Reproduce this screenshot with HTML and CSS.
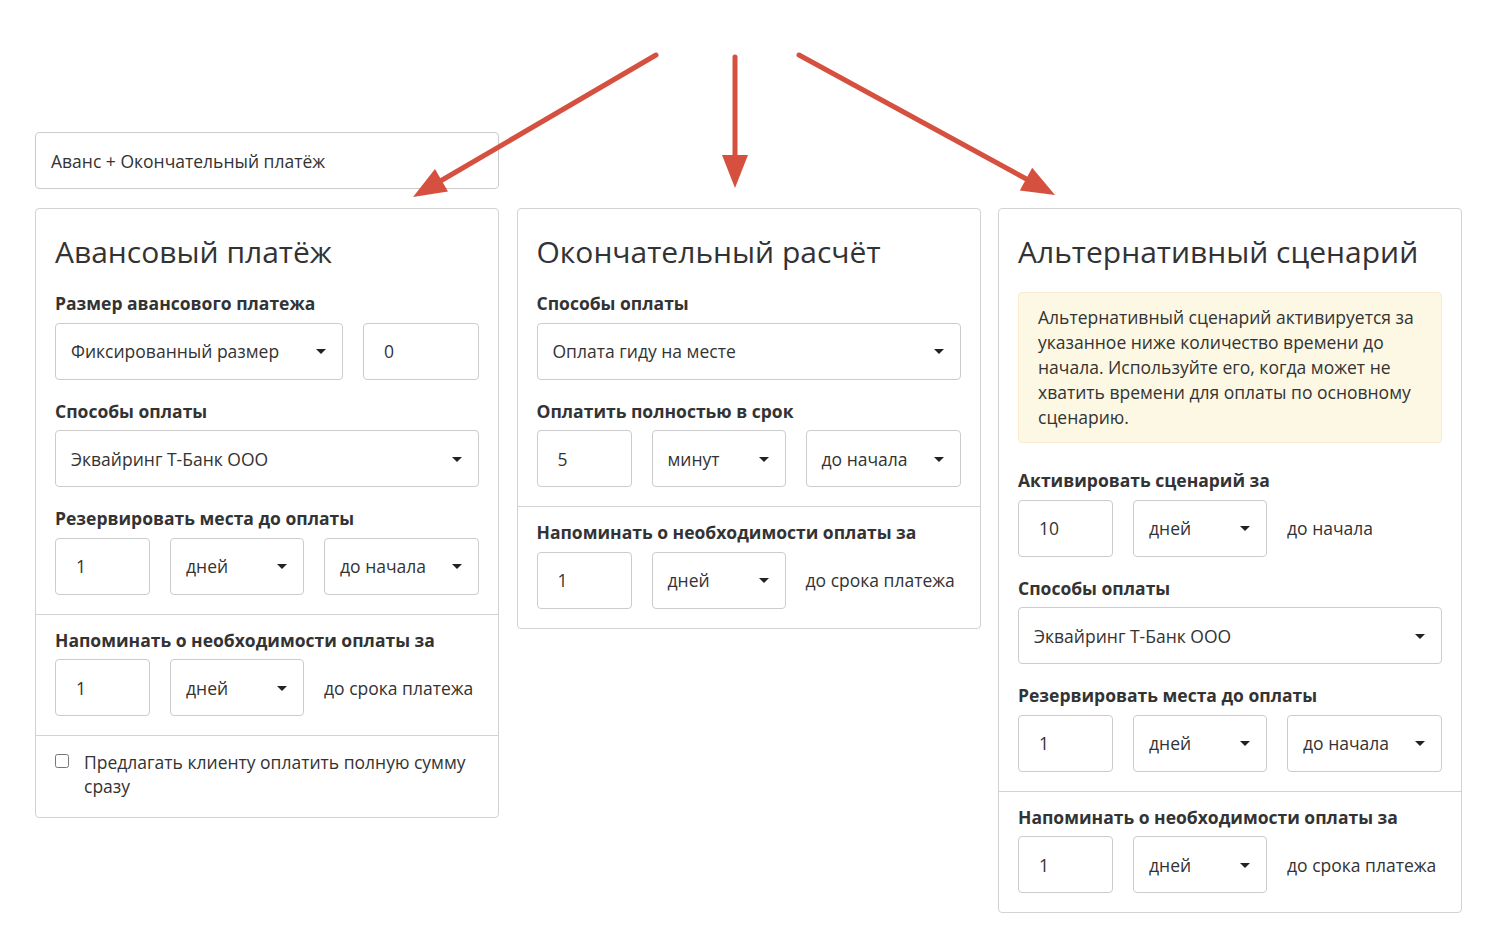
FILE: index.html
```html
<!DOCTYPE html>
<html lang="ru">
<head>
    <meta charset="UTF-8">
    <meta name="viewport" content="width=device-width, initial-scale=1.0">
    <title>Схема оплаты</title>
    <link rel="stylesheet" href="styles.css">
</head>
<body>
    <div class="page">
        <!-- стрелки-пометки поверх формы -->
        <svg class="arrows" width="1487" height="929" viewBox="0 0 1487 929">
            <g stroke="#d5503f" stroke-width="5" stroke-linecap="round" fill="none">
                <line x1="656" y1="55" x2="437" y2="183" />
                <line x1="735" y1="57" x2="735" y2="160" />
                <line x1="799" y1="55" x2="1030" y2="181" />
            </g>
            <g fill="#d5503f">
                <polygon points="413,197 448,191.5 435,169" />
                <polygon points="735,188 722,155 748,155" />
                <polygon points="1055,195 1019.8,190.6 1032.2,167.8" />
            </g>
        </svg>

        <div class="mode-select">Аванс + Окончательный платёж</div>

        <div class="columns">
            <!-- Аванс -->
            <div class="panel">
                <div class="section">
                    <h2>Авансовый платёж</h2>
                    <div class="field">
                        <label>Размер авансового платежа</label>
                        <div class="row row-amount">
                            <div class="select">Фиксированный размер</div>
                            <input class="input" type="text" value="0">
                        </div>
                    </div>
                    <div class="field">
                        <label>Способы оплаты</label>
                        <div class="select">Эквайринг Т-Банк ООО</div>
                    </div>
                    <div class="field">
                        <label>Резервировать места до оплаты</label>
                        <div class="row">
                            <input class="input" type="text" value="1">
                            <div class="select">дней</div>
                            <div class="select">до начала</div>
                        </div>
                    </div>
                </div>
                <div class="section">
                    <div class="field">
                        <label>Напоминать о необходимости оплаты за</label>
                        <div class="row">
                            <input class="input" type="text" value="1">
                            <div class="select">дней</div>
                            <span class="suffix">до срока платежа</span>
                        </div>
                    </div>
                </div>
                <div class="section">
                    <label class="check">
                        <input type="checkbox">
                        <span>Предлагать клиенту оплатить полную сумму сразу</span>
                    </label>
                </div>
            </div>

            <!-- Окончательный расчёт -->
            <div class="panel">
                <div class="section">
                    <h2>Окончательный расчёт</h2>
                    <div class="field">
                        <label>Способы оплаты</label>
                        <div class="select">Оплата гиду на месте</div>
                    </div>
                    <div class="field">
                        <label>Оплатить полностью в срок</label>
                        <div class="row">
                            <input class="input" type="text" value="5">
                            <div class="select">минут</div>
                            <div class="select">до начала</div>
                        </div>
                    </div>
                </div>
                <div class="section">
                    <div class="field">
                        <label>Напоминать о необходимости оплаты за</label>
                        <div class="row">
                            <input class="input" type="text" value="1">
                            <div class="select">дней</div>
                            <span class="suffix">до срока платежа</span>
                        </div>
                    </div>
                </div>
            </div>

            <!-- Альтернативный сценарий -->
            <div class="panel">
                <div class="section">
                    <h2>Альтернативный сценарий</h2>
                    <div class="alert">
                        Альтернативный сценарий активируется за указанное ниже количество времени до начала. Используйте его, когда может не хватить времени для оплаты по основному сценарию.
                    </div>
                    <div class="field">
                        <label>Активировать сценарий за</label>
                        <div class="row">
                            <input class="input" type="text" value="10">
                            <div class="select">дней</div>
                            <span class="suffix">до начала</span>
                        </div>
                    </div>
                    <div class="field">
                        <label>Способы оплаты</label>
                        <div class="select">Эквайринг Т-Банк ООО</div>
                    </div>
                    <div class="field">
                        <label>Резервировать места до оплаты</label>
                        <div class="row">
                            <input class="input" type="text" value="1">
                            <div class="select">дней</div>
                            <div class="select">до начала</div>
                        </div>
                    </div>
                </div>
                <div class="section">
                    <div class="field">
                        <label>Напоминать о необходимости оплаты за</label>
                        <div class="row">
                            <input class="input" type="text" value="1">
                            <div class="select">дней</div>
                            <span class="suffix">до срока платежа</span>
                        </div>
                    </div>
                </div>
            </div>
        </div>
    </div>
</body>
</html>
```

FILE: styles.css
```css
/* Основа */
body {
    margin: 0;
    background: #fff;
    color: #333;
    font-family: 'Open Sans', 'Noto Sans', sans-serif;
    font-size: 17.5px;
}

.page {
    position: relative;
    padding: 132px 0 0 35px;
}

/* Пометки-стрелки */
.arrows {
    position: absolute;
    top: 0;
    left: 0;
    z-index: 2;
    pointer-events: none;
}

.mode-select {
    box-sizing: border-box;
    width: 464px;
    height: 57px;
    margin-bottom: 19px;
    padding: 0 15px;
    border: 1px solid #ccc;
    border-radius: 4px;
    display: flex;
    align-items: center;
}

.columns {
    display: grid;
    grid-template-columns: repeat(3, 464px);
    gap: 17.5px;
    align-items: start;
}

/* Панели */
.panel {
    border: 1px solid #d2d2d2;
    border-radius: 4px;
}

.section {
    padding: 14px 19px 19px;
}

.section:first-child {
    padding-top: 19px;
}

.section + .section {
    border-top: 1px solid #d2d2d2;
}

h2 {
    margin: 6px 0 22px;
    font-size: 30px;
    font-weight: 400;
    line-height: 36px;
}

.field {
    margin-bottom: 20px;
}

.field:last-child {
    margin-bottom: 0;
}

.field > label {
    display: block;
    font-weight: 700;
    line-height: 23px;
    margin-bottom: 7.5px;
}

.row {
    display: grid;
    grid-template-columns: 95px 134px 1fr;
    gap: 20px;
    align-items: center;
}

.row-amount {
    grid-template-columns: 288px 1fr;
}

/* Поля */
.input,
.select {
    box-sizing: border-box;
    height: 57px;
    border: 1px solid #ccc;
    border-radius: 4px;
    background: #fff;
    color: #333;
    font-family: inherit;
    font-size: 17.5px;
}

.input {
    width: 100%;
    padding: 0 20px;
}

.select {
    position: relative;
    display: flex;
    align-items: center;
    padding: 0 40px 0 15px;
    white-space: nowrap;
}

.select::after {
    content: '';
    position: absolute;
    right: 16px;
    top: 50%;
    margin-top: -2px;
    border-left: 5px solid transparent;
    border-right: 5px solid transparent;
    border-top: 5px solid #222;
}

.suffix {
    white-space: nowrap;
}

/* Подсказка */
.alert {
    margin-bottom: 26px;
    padding: 12px 19px;
    background: #fcf8e3;
    border: 1px solid #faebcc;
    border-radius: 4px;
    line-height: 25px;
}

.check {
    display: flex;
    align-items: flex-start;
    line-height: 24px;
}

.check input {
    width: 14px;
    height: 14px;
    margin: 4px 15px 0 0;
    flex: none;
}
```
